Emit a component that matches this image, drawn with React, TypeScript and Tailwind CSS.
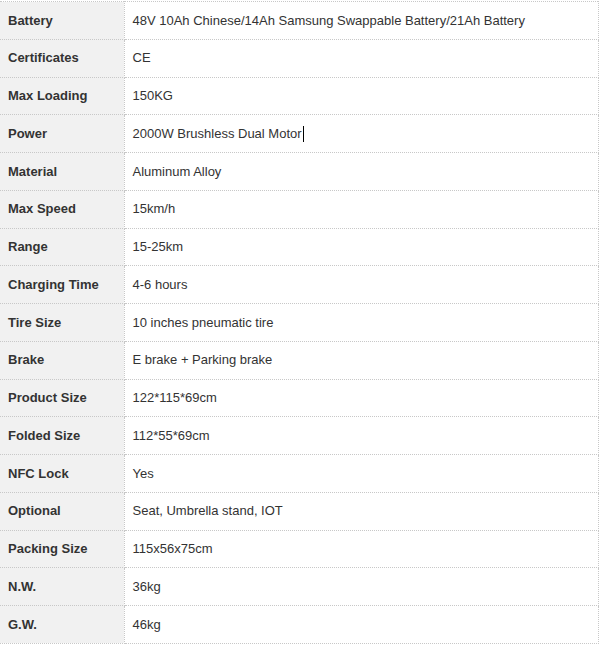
const specs: [string, string][] = [
  ["Battery", "48V 10Ah Chinese/14Ah Samsung Swappable Battery/21Ah Battery"],
  ["Certificates", "CE"],
  ["Max Loading", "150KG"],
  ["Power", "2000W Brushless Dual Motor"],
  ["Material", "Aluminum Alloy"],
  ["Max Speed", "15km/h"],
  ["Range", "15-25km"],
  ["Charging Time", "4-6 hours"],
  ["Tire Size", "10 inches pneumatic tire"],
  ["Brake", "E brake + Parking brake"],
  ["Product Size", "122*115*69cm"],
  ["Folded Size", "112*55*69cm"],
  ["NFC Lock", "Yes"],
  ["Optional", "Seat, Umbrella stand, IOT"],
  ["Packing Size", "115x56x75cm"],
  ["N.W.", "36kg"],
  ["G.W.", "46kg"],
];

export default function App() {
  return (
    <div className="min-h-screen bg-white pt-[1px] font-['Liberation_Sans',Arial,sans-serif] text-[13px] text-[#333]">
      <table className="w-[599px] border-collapse border-t border-dotted border-[#c8c8c8]">
        <tbody>
          {specs.map(([label, value]) => (
            <tr key={label} className="h-[37.76px]">
              <td className="w-[124px] border-r border-b border-dotted border-[#c8c8c8] bg-[#f1f1f1] px-2 py-0 align-middle font-bold">
                {label}
              </td>
              <td className="border-r border-b border-dotted border-[#c8c8c8] px-2 py-0 align-middle">
                {value}
                {label === "Power" && (
                  <span className="ml-px inline-block h-[16px] w-px bg-black align-middle" />
                )}
              </td>
            </tr>
          ))}
        </tbody>
      </table>
    </div>
  );
}
